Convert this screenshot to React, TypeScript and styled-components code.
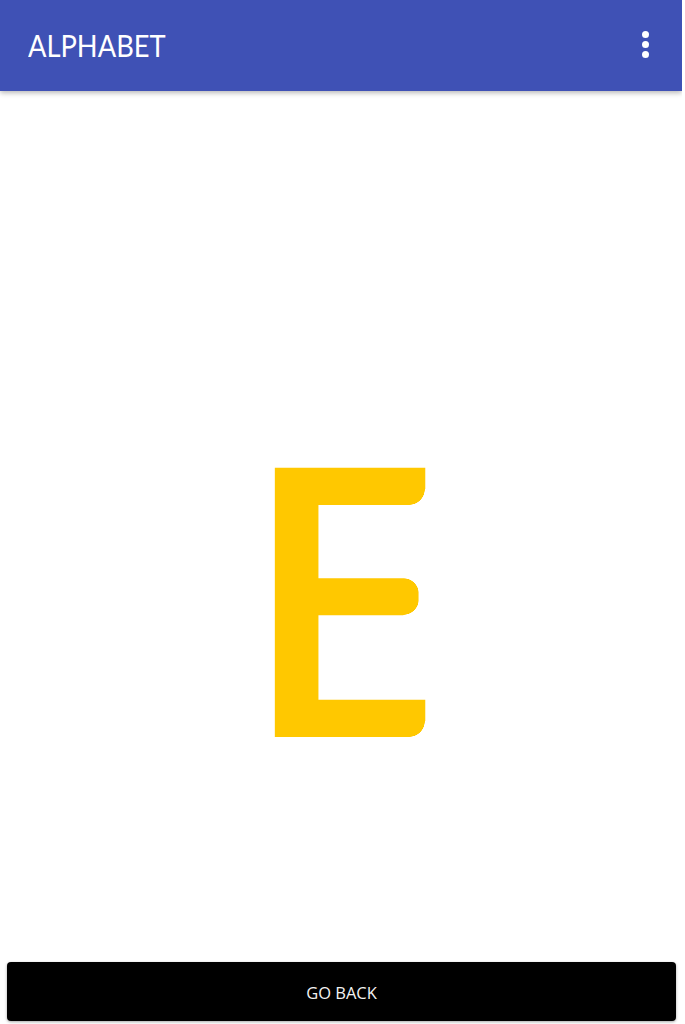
import styled, { createGlobalStyle } from "styled-components";

const GlobalStyle = createGlobalStyle`
  html, body {
    margin: 0;
    padding: 0;
    background: #fff;
  }
  * {
    box-sizing: border-box;
  }
`;

const Screen = styled.div`
  width: 682px;
  height: 1024px;
  display: flex;
  flex-direction: column;
  overflow: hidden;
`;

const TopBar = styled.header`
  height: 91px;
  flex: none;
  padding: 0 27px 0 28px;
  display: flex;
  align-items: center;
  justify-content: space-between;
  background: #3f51b5;
  box-shadow: 0 2px 5px rgba(0, 0, 0, 0.28);
  position: relative;
`;

const Title = styled.h1`
  margin: 0;
  color: #fff;
  font: 400 31px/1 Lato, sans-serif;
  transform: scaleX(0.88);
  transform-origin: left center;
`;

const MenuDots = styled.div`
  width: 20px;
  margin-top: -2px;
  display: flex;
  flex-direction: column;
  align-items: center;
  gap: 3px;
  span {
    width: 7px;
    height: 7px;
    border-radius: 50%;
    background: #fff;
  }
`;

const Stage = styled.main`
  flex: 1;
  padding: 0 0 225px 18px;
  display: flex;
  align-items: flex-end;
  justify-content: center;
`;

/* the soft bar ends of the letter are white corners laid over the real glyph */
const Letter = styled.div`
  position: relative;
  width: 152px;
  height: 269px;
  color: #ffc800;
  font: 600 377px/245px "Open Sans", sans-serif;
  text-indent: -34.5px;
  transform: scaleX(0.987);
  transform-origin: left center;

  &::after {
    content: "";
    position: absolute;
    inset: 0 -4px 0 0;
    background:
      radial-gradient(circle at 0 0, transparent 15.5px, #fff 16px) 137px 21px / 19px 17px no-repeat,
      radial-gradient(circle at 0 100%, transparent 15.5px, #fff 16px) 131px 110px / 19px 16px no-repeat,
      radial-gradient(circle at 0 0, transparent 15.5px, #fff 16px) 131px 131px / 19px 17px no-repeat,
      radial-gradient(circle at 0 0, transparent 15.5px, #fff 16px) 137px 253px / 19px 17px no-repeat;
  }
`;

const BackButton = styled.button`
  flex: none;
  height: 59px;
  margin: 0 6px 3px 7px;
  padding: 3px 0 0;
  border: 0;
  border-radius: 4px;
  background: #000;
  color: #f2f2f2;
  font: 400 16.5px/1 "Open Sans", sans-serif;
  box-shadow: 0 1px 3px rgba(0, 0, 0, 0.35);
`;

export default function App() {
  return (
    <Screen>
      <GlobalStyle />
      <TopBar>
        <Title>ALPHABET</Title>
        <MenuDots>
          <span />
          <span />
          <span />
        </MenuDots>
      </TopBar>
      <Stage>
        <Letter>E</Letter>
      </Stage>
      <BackButton>GO BACK</BackButton>
    </Screen>
  );
}
